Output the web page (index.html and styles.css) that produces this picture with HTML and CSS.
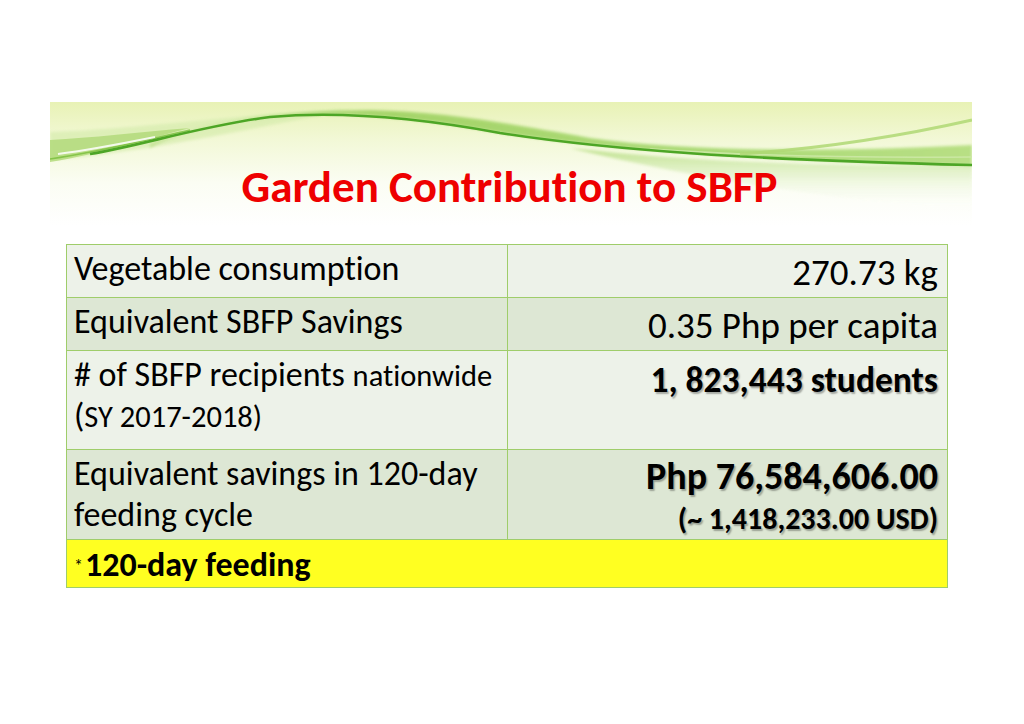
FILE: index.html
```html
<!DOCTYPE html>
<html lang="en">
<head>
<meta charset="utf-8">
<title>Garden Contribution to SBFP</title>
<link rel="stylesheet" href="styles.css">
</head>
<body>
<div class="slide">
  <header class="banner">
    <svg class="banner-art" viewBox="0 0 922 124" preserveAspectRatio="none" aria-hidden="true">
      <defs>
        <linearGradient id="bg" x1="0" y1="0" x2="0" y2="1">
          <stop offset="0" stop-color="#e8f2b5"/>
          <stop offset="0.3" stop-color="#f2f8d6"/>
          <stop offset="0.65" stop-color="#fbfdf3"/>
          <stop offset="1" stop-color="#ffffff"/>
        </linearGradient>
        <linearGradient id="band" x1="0" y1="0" x2="1" y2="0">
          <stop offset="0" stop-color="#b8de85"/>
          <stop offset="0.3" stop-color="#94cd55"/>
          <stop offset="0.7" stop-color="#9ad25d"/>
          <stop offset="1" stop-color="#a9d96e"/>
        </linearGradient>
        <linearGradient id="lower" x1="0" y1="0" x2="0" y2="1">
          <stop offset="0" stop-color="#b7de82"/>
          <stop offset="1" stop-color="#ffffff" stop-opacity="0"/>
        </linearGradient>
        <filter id="soft" x="-5%" y="-50%" width="110%" height="200%">
          <feGaussianBlur stdDeviation="1.8"/>
        </filter>
        <filter id="soft1" x="-5%" y="-50%" width="110%" height="200%">
          <feGaussianBlur stdDeviation="0.7"/>
        </filter>
      </defs>
      <rect width="922" height="124" fill="url(#bg)"/>
      <path d="M0 30 C60 28 130 20 220 12 L300 8 C200 26 100 50 0 58 Z" fill="#d6ecad" opacity="0.7" filter="url(#soft)"/>
      <path d="M0 38 C40 36 90 30 140 26 C100 36 50 52 0 60 Z" fill="#b3db7c" opacity="0.85" filter="url(#soft1)"/>
      <path d="M0 57 C50 50 100 37 140 28" fill="none" stroke="#7cc040" stroke-width="1.6" opacity="0.85" filter="url(#soft1)"/>
      <path d="M8 52 C40 48 70 42 105 35" fill="none" stroke="#ffffff" stroke-width="2" opacity="0.85" filter="url(#soft1)"/>
      <path d="M520 46 C640 60 780 64 922 64 L922 108 C800 100 660 80 520 46 Z" fill="url(#lower)" opacity="0.9" filter="url(#soft)"/>
      <path d="M100 42 C160 20 230 8 320 8 C400 10 460 22 540 36 C640 50 780 50 922 43 L922 64 C700 58 560 48 450 31 C380 18 300 8 220 15 C160 22 120 34 100 46 Z" fill="url(#band)" opacity="0.8" filter="url(#soft)"/>
      <path d="M600 47 C720 55 820 56 922 55" fill="none" stroke="#cde9a6" stroke-width="1.6" opacity="0.9" filter="url(#soft1)"/>
      <path d="M40 52 C90 44 150 24 220 15 C300 8 380 18 450 31 C560 48 700 58 922 63" fill="none" stroke="#4ea626" stroke-width="2.6" filter="url(#soft1)"/>
      <path d="M690 52 C780 46 860 32 922 18" fill="none" stroke="#b0d975" stroke-width="3" opacity="0.85" filter="url(#soft1)"/>
    </svg>
    <h1 class="title">Garden Contribution to SBFP</h1>
  </header>

  <div class="grid">
    <div class="cell odd label">Vegetable consumption</div>
    <div class="cell odd value">270.73 kg</div>

    <div class="cell even label">Equivalent SBFP Savings</div>
    <div class="cell even value">0.35 Php per capita</div>

    <div class="cell odd label"># of SBFP recipients <span class="small">nationwide</span><br>(<span class="small">SY 2017-2018)</span></div>
    <div class="cell odd value strong students">1, 823,443 students</div>

    <div class="cell even label">Equivalent savings in 120-day<br>feeding cycle</div>
    <div class="cell even value strong">
      <div class="amount">Php 76,584,606.00</div>
      <div class="usd">(~ 1,418,233.00 USD)</div>
    </div>

    <div class="cell note"><span class="star">*</span><b>120-day feeding</b></div>
  </div>
</div>
</body>
</html>
```

FILE: styles.css
```css
* { box-sizing: border-box; }

html, body {
  margin: 0;
  padding: 0;
  background: #ffffff;
}

body {
  font-family: Carlito, Calibri, Lato, "Liberation Sans", sans-serif;
  font-variant-ligatures: none;
  color: #000000;
}

.slide {
  width: 1024px;
  height: 724px;
  padding-top: 102px;
}

.banner {
  position: relative;
  width: 922px;
  height: 124px;
  margin-left: 50px;
}

.banner-art {
  position: absolute;
  inset: 0;
  width: 100%;
  height: 100%;
  display: block;
}

.title {
  position: relative;
  margin: 0;
  padding-top: 62px;
  padding-right: 3px;
  text-align: center;
  font-size: 45px;
  line-height: 1;
  font-weight: 700;
  color: #ee0000;
  white-space: nowrap;
}

.grid {
  display: grid;
  grid-template-columns: 441px 440px;
  grid-template-rows: 53px 53px 99px 90px 48px;
  width: 882px;
  margin: 18px 0 0 66px;
  border-top: 1px solid #9fcd6a;
  border-left: 1px solid #9fcd6a;
}

.cell {
  border-right: 1px solid #9fcd6a;
  border-bottom: 1px solid #9fcd6a;
  padding: 4px 9px 0 7px;
  line-height: 1.2;
  white-space: nowrap;
}

.odd { background: #edf2e9; }
.even { background: #dde7d4; }

.label { font-size: 34px; }
.small { font-size: 30.5px; }

.value {
  text-align: right;
  font-size: 37px;
  padding-top: 6px;
}

.strong {
  font-weight: 700;
  text-shadow: 1.5px 1.5px 1.5px rgba(0, 0, 0, 0.3);
}

.value.strong { font-size: 35.5px; padding-top: 4px; }
.value.students { padding-top: 8px; }

.amount {
  font-size: 38px;
  line-height: 1.2;
}

.usd {
  font-size: 30px;
  line-height: 1.2;
  margin-top: 1px;
}

.note {
  grid-column: 1 / span 2;
  background: #ffff21;
  font-size: 34px;
  padding-top: 5px;
}

.star {
  font-size: 18px;
  margin-right: 2px;
  vertical-align: 4px;
}
```
